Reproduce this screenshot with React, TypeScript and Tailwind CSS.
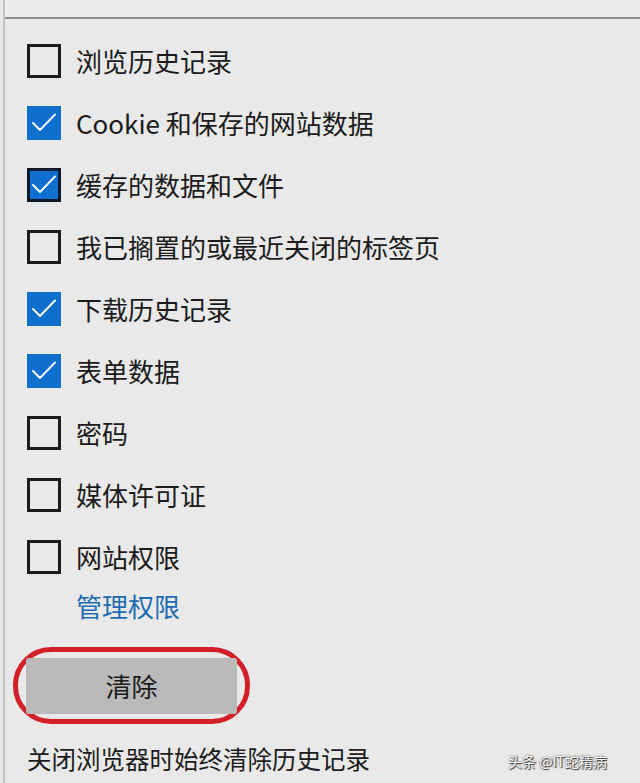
const items: { label: string; checked: boolean; focus?: boolean }[] = [
  { label: "浏览历史记录", checked: false },
  { label: "Cookie 和保存的网站数据", checked: true },
  { label: "缓存的数据和文件", checked: true, focus: true },
  { label: "我已搁置的或最近关闭的标签页", checked: false },
  { label: "下载历史记录", checked: true },
  { label: "表单数据", checked: true },
  { label: "密码", checked: false },
  { label: "媒体许可证", checked: false },
  { label: "网站权限", checked: false },
];

function Box({ checked, focus }: { checked: boolean; focus?: boolean }) {
  if (!checked) {
    return <div className="w-[34px] h-[34px] shrink-0 border-[3px] border-[#1c1c1c]" />;
  }
  return (
    <div
      className={
        "w-[34px] h-[34px] shrink-0 bg-[#0f6fcf] flex items-center justify-center " +
        (focus ? "border-[3px] border-[#0d1a2c]" : "")
      }
    >
      <svg width="26" height="26" viewBox="0 0 26 26" fill="none">
        <path d="M2 13 L9 20 L24 4.5" stroke="#ffffff" strokeWidth="1.8" strokeLinecap="round" strokeLinejoin="round" />
      </svg>
    </div>
  );
}

export default function App() {
  return (
    <div
      className="relative w-[640px] h-[783px] bg-[#e9e9e9] overflow-hidden text-[#1b1b1b]"
      style={{ fontFamily: '"Noto Sans CJK SC", "Noto Sans", sans-serif' }}
    >
      <div className="h-full ml-[3px] border-l-2 border-[#c4c4c4] flex flex-col">
        <div className="h-[19px] bg-[#ececec] border-b-2 border-[#8c8c8c]" />
        <div className="flex flex-col pl-[22px] pt-[11px]">
          {items.map((it) => (
            <div key={it.label} className="h-[62px] flex items-center gap-[15px]">
              <Box checked={it.checked} focus={it.focus} />
              <span className="text-[26px] leading-none">{it.label}</span>
            </div>
          ))}
          <div className="pl-[49px] h-[36px] flex items-center text-[26px] leading-none text-[#1f6cb3]">
            管理权限
          </div>
        </div>
        <div className="ml-[8px] mt-[23px] w-[237px] h-[77px] rounded-[38px] border-[5px] border-[#d21f28] flex items-center justify-center">
          <div className="w-[211px] h-[56px] bg-[#bababa] rounded-[3px] flex items-center justify-center text-[26px] leading-none">
            清除
          </div>
        </div>
        <div className="pl-[22px] mt-[23px] text-[24.5px] leading-none">关闭浏览器时始终清除历史记录</div>
      </div>
      <div
        className="absolute left-[508px] top-[754px] text-[14px] leading-none text-white"
        style={{ textShadow: "0 0 2px #333, 1px 1px 1px #333" }}
      >
        头条 @IT蛇精病
      </div>
    </div>
  );
}
